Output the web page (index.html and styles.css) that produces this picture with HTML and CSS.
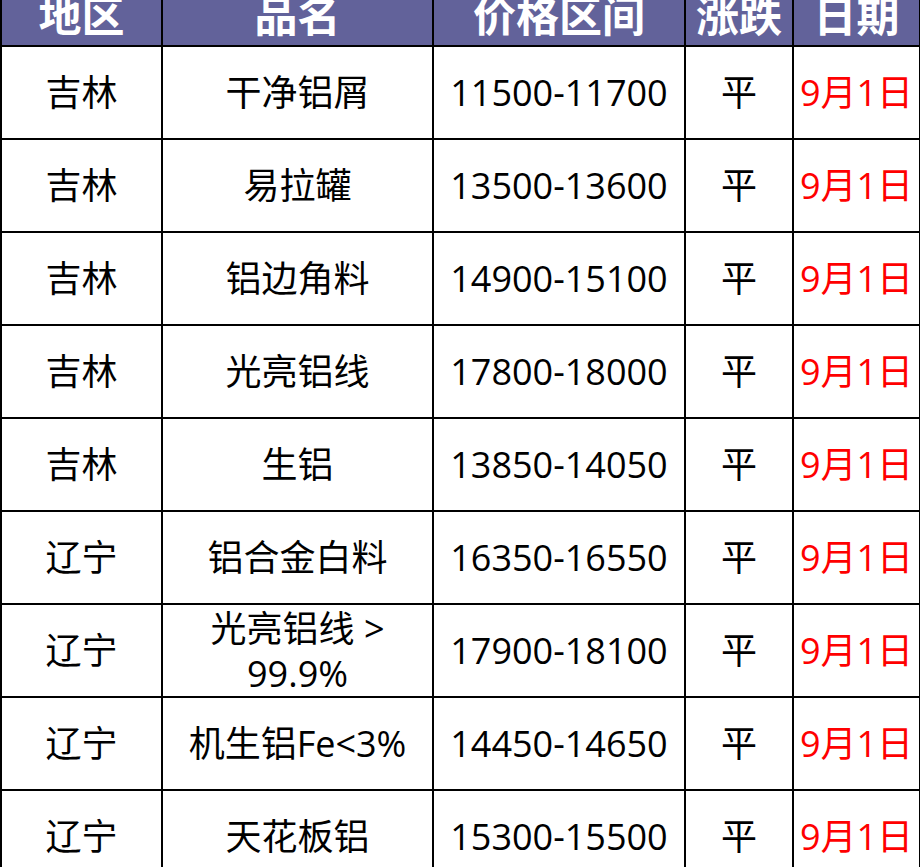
FILE: index.html
```html
<!DOCTYPE html>
<html lang="zh">
<head>
<meta charset="utf-8">
<link rel="stylesheet" href="styles.css">
</head>
<body>
<table class="price">
  <colgroup>
    <col class="c1"><col class="c2"><col class="c3"><col class="c4"><col class="c5">
  </colgroup>
  <thead>
    <tr><th>地区</th><th>品名</th><th>价格区间</th><th>涨跌</th><th>日期</th></tr>
  </thead>
  <tbody>
    <tr><td>吉林</td><td>干净铝屑</td><td>11500-11700</td><td>平</td><td class="date">9月1日</td></tr>
    <tr><td>吉林</td><td>易拉罐</td><td>13500-13600</td><td>平</td><td class="date">9月1日</td></tr>
    <tr><td>吉林</td><td>铝边角料</td><td>14900-15100</td><td>平</td><td class="date">9月1日</td></tr>
    <tr><td>吉林</td><td>光亮铝线</td><td>17800-18000</td><td>平</td><td class="date">9月1日</td></tr>
    <tr><td>吉林</td><td>生铝</td><td>13850-14050</td><td>平</td><td class="date">9月1日</td></tr>
    <tr><td>辽宁</td><td>铝合金白料</td><td>16350-16550</td><td>平</td><td class="date">9月1日</td></tr>
    <tr><td>辽宁</td><td class="two">光亮铝线 &gt;<br>99.9%</td><td>17900-18100</td><td>平</td><td class="date">9月1日</td></tr>
    <tr><td>辽宁</td><td>机生铝Fe&lt;3%</td><td>14450-14650</td><td>平</td><td class="date">9月1日</td></tr>
    <tr><td>辽宁</td><td>天花板铝</td><td>15300-15500</td><td>平</td><td class="date">9月1日</td></tr>
  </tbody>
</table>
</body>
</html>
```

FILE: styles.css
```css
html, body {
  margin: 0;
  padding: 0;
  background: #ffffff;
  overflow: hidden;
}
.price {
  border-collapse: collapse;
  table-layout: fixed;
  width: 919px;
  margin-top: -14px;
  font-family: "Open Sans", "Noto Sans CJK SC", "Noto Sans", sans-serif;
}
.c1 { width: 161px; }
.c2 { width: 271px; }
.c3 { width: 252px; }
.c4 { width: 108px; }
.c5 { width: 127px; }
.price th {
  background: #62629a;
  color: #ffffff;
  font-size: 43px;
  font-weight: 700;
  height: 59px;
  padding: 0;
  border: 2px solid #000000;
  border-top: none;
  line-height: 1;
}
.price td {
  height: 91px;
  padding: 0;
  text-align: center;
  vertical-align: middle;
  font-size: 36px;
  color: #000000;
  border: 2px solid #000000;
  line-height: 47px;
}
.price td.two {
  line-height: 45px;
}
.price td.date {
  color: #ff0000;
}
```
